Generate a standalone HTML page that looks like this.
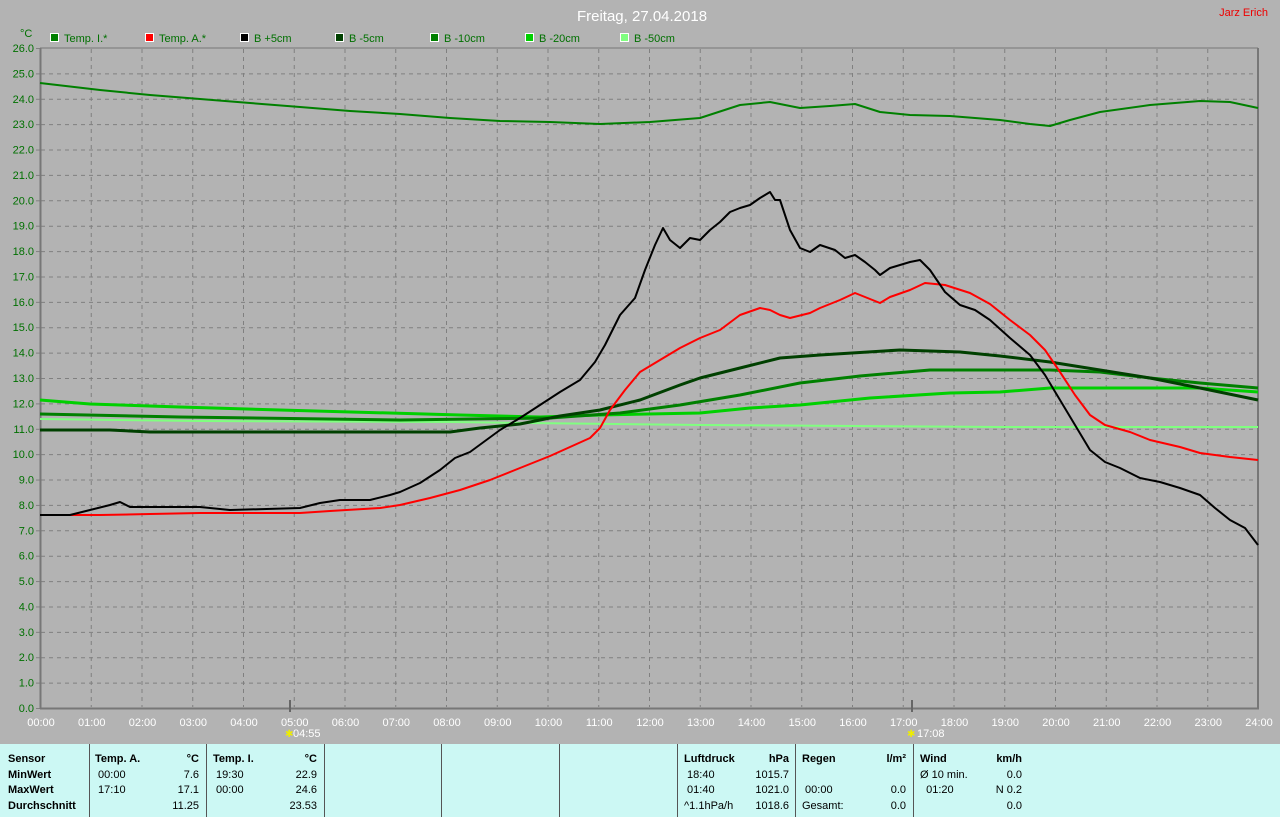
<!DOCTYPE html><html><head><meta charset="utf-8"><style>
body{margin:0;width:1280px;height:817px;background:#b3b3b3;overflow:hidden;font-family:"Liberation Sans",sans-serif}
svg{position:absolute;left:0;top:0}
.tb{position:absolute;left:0;top:744px;width:1280px;height:73px;background:#ccf8f4;font-size:11px;color:#000}
.c{position:absolute;top:8px;line-height:15.5px}
.v{position:absolute;top:0;width:1px;height:73px;background:#555}
b{font-weight:bold}
</style></head><body>
<svg width="1280" height="744" font-family="Liberation Sans" font-size="11">
<text x="642" y="21" fill="#fff" font-size="15" text-anchor="middle">Freitag, 27.04.2018</text>
<text x="1268" y="16" fill="#e00" text-anchor="end">Jarz Erich</text>
<text x="20" y="37" fill="#007000">°C</text>
<g font-size="11" fill="#007000">
<rect x="50.5" y="33.5" width="8" height="8" fill="#008000" stroke="#fff"/><text x="64" y="42">Temp. I.*</text>
<rect x="145.5" y="33.5" width="8" height="8" fill="#f00" stroke="#fff"/><text x="159" y="42">Temp. A.*</text>
<rect x="240.5" y="33.5" width="8" height="8" fill="#000" stroke="#fff"/><text x="254" y="42">B +5cm</text>
<rect x="335.5" y="33.5" width="8" height="8" fill="#004000" stroke="#fff"/><text x="349" y="42">B -5cm</text>
<rect x="430.5" y="33.5" width="8" height="8" fill="#008000" stroke="#fff"/><text x="444" y="42">B -10cm</text>
<rect x="525.5" y="33.5" width="8" height="8" fill="#00d000" stroke="#fff"/><text x="539" y="42">B -20cm</text>
<rect x="620.5" y="33.5" width="8" height="8" fill="#80ff80" stroke="#fff"/><text x="634" y="42">B -50cm</text>
</g>
<g id="grid" stroke="#808080" stroke-dasharray="4,4" stroke-width="1"></g>
<g id="yl" fill="#007000" text-anchor="end"></g>
<g id="xl" fill="#fff" text-anchor="middle"></g>
<line x1="40" y1="48" x2="1258" y2="48" stroke="#777"/>
<line x1="40.5" y1="48" x2="40.5" y2="709" stroke="#777" stroke-width="2"/>
<line x1="40" y1="708.5" x2="1259" y2="708.5" stroke="#777" stroke-width="2"/>
<line x1="1258" y1="48" x2="1258" y2="709" stroke="#777" stroke-width="2"/>
<line x1="290" y1="700" x2="290" y2="712" stroke="#666" stroke-width="2"/>
<line x1="912" y1="700" x2="912" y2="712" stroke="#666" stroke-width="2"/>
<text x="293" y="737" fill="#fff">04:55</text><text x="285" y="737" fill="#ee0" font-size="10">✱</text>
<text x="917" y="737" fill="#fff">17:08</text><text x="907" y="737" fill="#ee0" font-size="10">✱</text>
<g fill="none" stroke-linejoin="round">
<polyline stroke="#80ff80" stroke-width="2" points="40,419 200,421 450,422 700,425 1000,427 1258,427"/>
<polyline stroke="#00d000" stroke-width="3" points="40,400 90,404 180,407 280,410 460,415 540,417 600,415 700,413 750,408 800,405 870,398 950,393 1000,392 1050,388 1200,388 1258,392"/>
<polyline stroke="#008000" stroke-width="3" points="40,414 180,417 400,420 550,418 620,413 680,405 740,395 800,383 860,376 930,370 1050,370 1100,372 1150,378 1200,383 1258,388"/>
<polyline stroke="#004000" stroke-width="3" points="40,430 110,430 150,432 300,432 450,432 480,428 520,424 560,416 600,410 640,400 680,385 700,378 740,368 780,358 820,355 900,350 960,352 1000,356 1050,362 1100,370 1150,378 1200,388 1258,400"/>
<polyline stroke="#008000" stroke-width="2" points="40,83 100,90 150,95 200,99 250,103 300,107 350,111 400,114 450,118 500,121 550,122 600,124 650,122 700,118 740,105 770,102 800,108 830,106 855,104 880,112 910,115 950,116 1000,120 1030,124 1050,126 1070,120 1100,112 1150,105 1200,101 1230,102 1258,108"/>
<polyline stroke="#f00" stroke-width="2" points="40,515 100,515 150,514 200,513 300,513 330,511 380,508 400,505 430,498 460,490 490,480 520,468 550,456 570,447 590,438 600,428 610,410 625,390 640,372 660,360 680,348 700,338 720,330 740,315 760,308 770,310 780,315 790,318 810,313 820,308 840,300 855,293 865,297 880,303 890,297 910,290 925,283 945,285 970,293 990,304 1010,320 1030,335 1045,350 1060,372 1075,395 1090,415 1105,425 1130,432 1150,440 1180,447 1200,453 1230,457 1258,460"/>
<polyline stroke="#000" stroke-width="2" points="40,515 70,515 90,510 110,505 120,502 130,507 200,507 230,510 300,508 320,503 340,500 370,500 390,495 400,492 420,483 440,470 455,458 470,452 485,441 500,430 520,418 540,405 560,392 580,380 595,362 605,345 620,315 635,298 645,270 655,245 663,228 670,240 680,248 690,238 700,240 710,230 720,222 730,212 740,208 750,205 760,198 770,192 775,200 780,200 790,230 800,248 810,252 820,245 835,250 845,258 855,255 865,262 875,270 880,275 890,268 900,265 910,262 920,260 930,270 945,292 960,305 975,310 990,320 1010,338 1030,355 1045,375 1060,400 1075,425 1090,450 1105,462 1120,468 1140,478 1160,482 1180,488 1200,495 1215,508 1230,520 1245,528 1258,545"/>
</g>
</svg>
<div class="tb">
<div class="v" style="left:89px"></div><div class="v" style="left:206px"></div><div class="v" style="left:324px"></div><div class="v" style="left:441px"></div><div class="v" style="left:559px"></div><div class="v" style="left:677px"></div><div class="v" style="left:795px"></div><div class="v" style="left:913px"></div>
<div class="c" style="left:8px"><b>Sensor</b><br><b>MinWert</b><br><b>MaxWert</b><br><b>Durchschnitt</b></div>
<div class="c" style="left:95px"><b>Temp. A.</b><br>&nbsp;00:00<br>&nbsp;17:10</div>
<div class="c" style="left:150px;width:49px;text-align:right"><b>°C</b><br>7.6<br>17.1<br>11.25</div>
<div class="c" style="left:213px"><b>Temp. I.</b><br>&nbsp;19:30<br>&nbsp;00:00</div>
<div class="c" style="left:268px;width:49px;text-align:right"><b>°C</b><br>22.9<br>24.6<br>23.53</div>
<div class="c" style="left:684px"><b>Luftdruck</b><br>&nbsp;18:40<br>&nbsp;01:40<br>^1.1hPa/h</div>
<div class="c" style="left:740px;width:49px;text-align:right"><b>hPa</b><br>1015.7<br>1021.0<br>1018.6</div>
<div class="c" style="left:802px"><b>Regen</b><br>&nbsp;<br>&nbsp;00:00<br>Gesamt:</div>
<div class="c" style="left:857px;width:49px;text-align:right"><b>l/m²</b><br>&nbsp;<br>0.0<br>0.0</div>
<div class="c" style="left:920px"><b>Wind</b><br>Ø 10 min.<br>&nbsp;&nbsp;01:20</div>
<div class="c" style="left:972px;width:50px;text-align:right"><b>km/h</b><br>0.0<br>N 0.2<br>0.0</div>
</div>
<script>
var ns="http://www.w3.org/2000/svg",g=document.getElementById("grid"),yl=document.getElementById("yl"),xl=document.getElementById("xl");
function el(p,t,a){var e=document.createElementNS(ns,t);for(var k in a)e.setAttribute(k,a[k]);p.appendChild(e);return e;}
for(var v=0;v<=26;v++){var y=708-v*660/26;if(v>0&&v<26)el(g,"line",{x1:41,x2:1257,y1:y+.5,y2:y+.5});el(g,"line",{x1:36,x2:41,y1:y+.5,y2:y+.5,"stroke-dasharray":"none"});var t=el(yl,"text",{x:34,y:y+4});t.textContent=v+".0";}
for(var h=0;h<=24;h++){var x=40+h*1218/24;if(h>0&&h<24)el(g,"line",{x1:x+.5,x2:x+.5,y1:49,y2:707});var t=el(xl,"text",{x:x+1,y:726});t.textContent=(h<10?"0":"")+h+":00";}
</script>
</body></html>
